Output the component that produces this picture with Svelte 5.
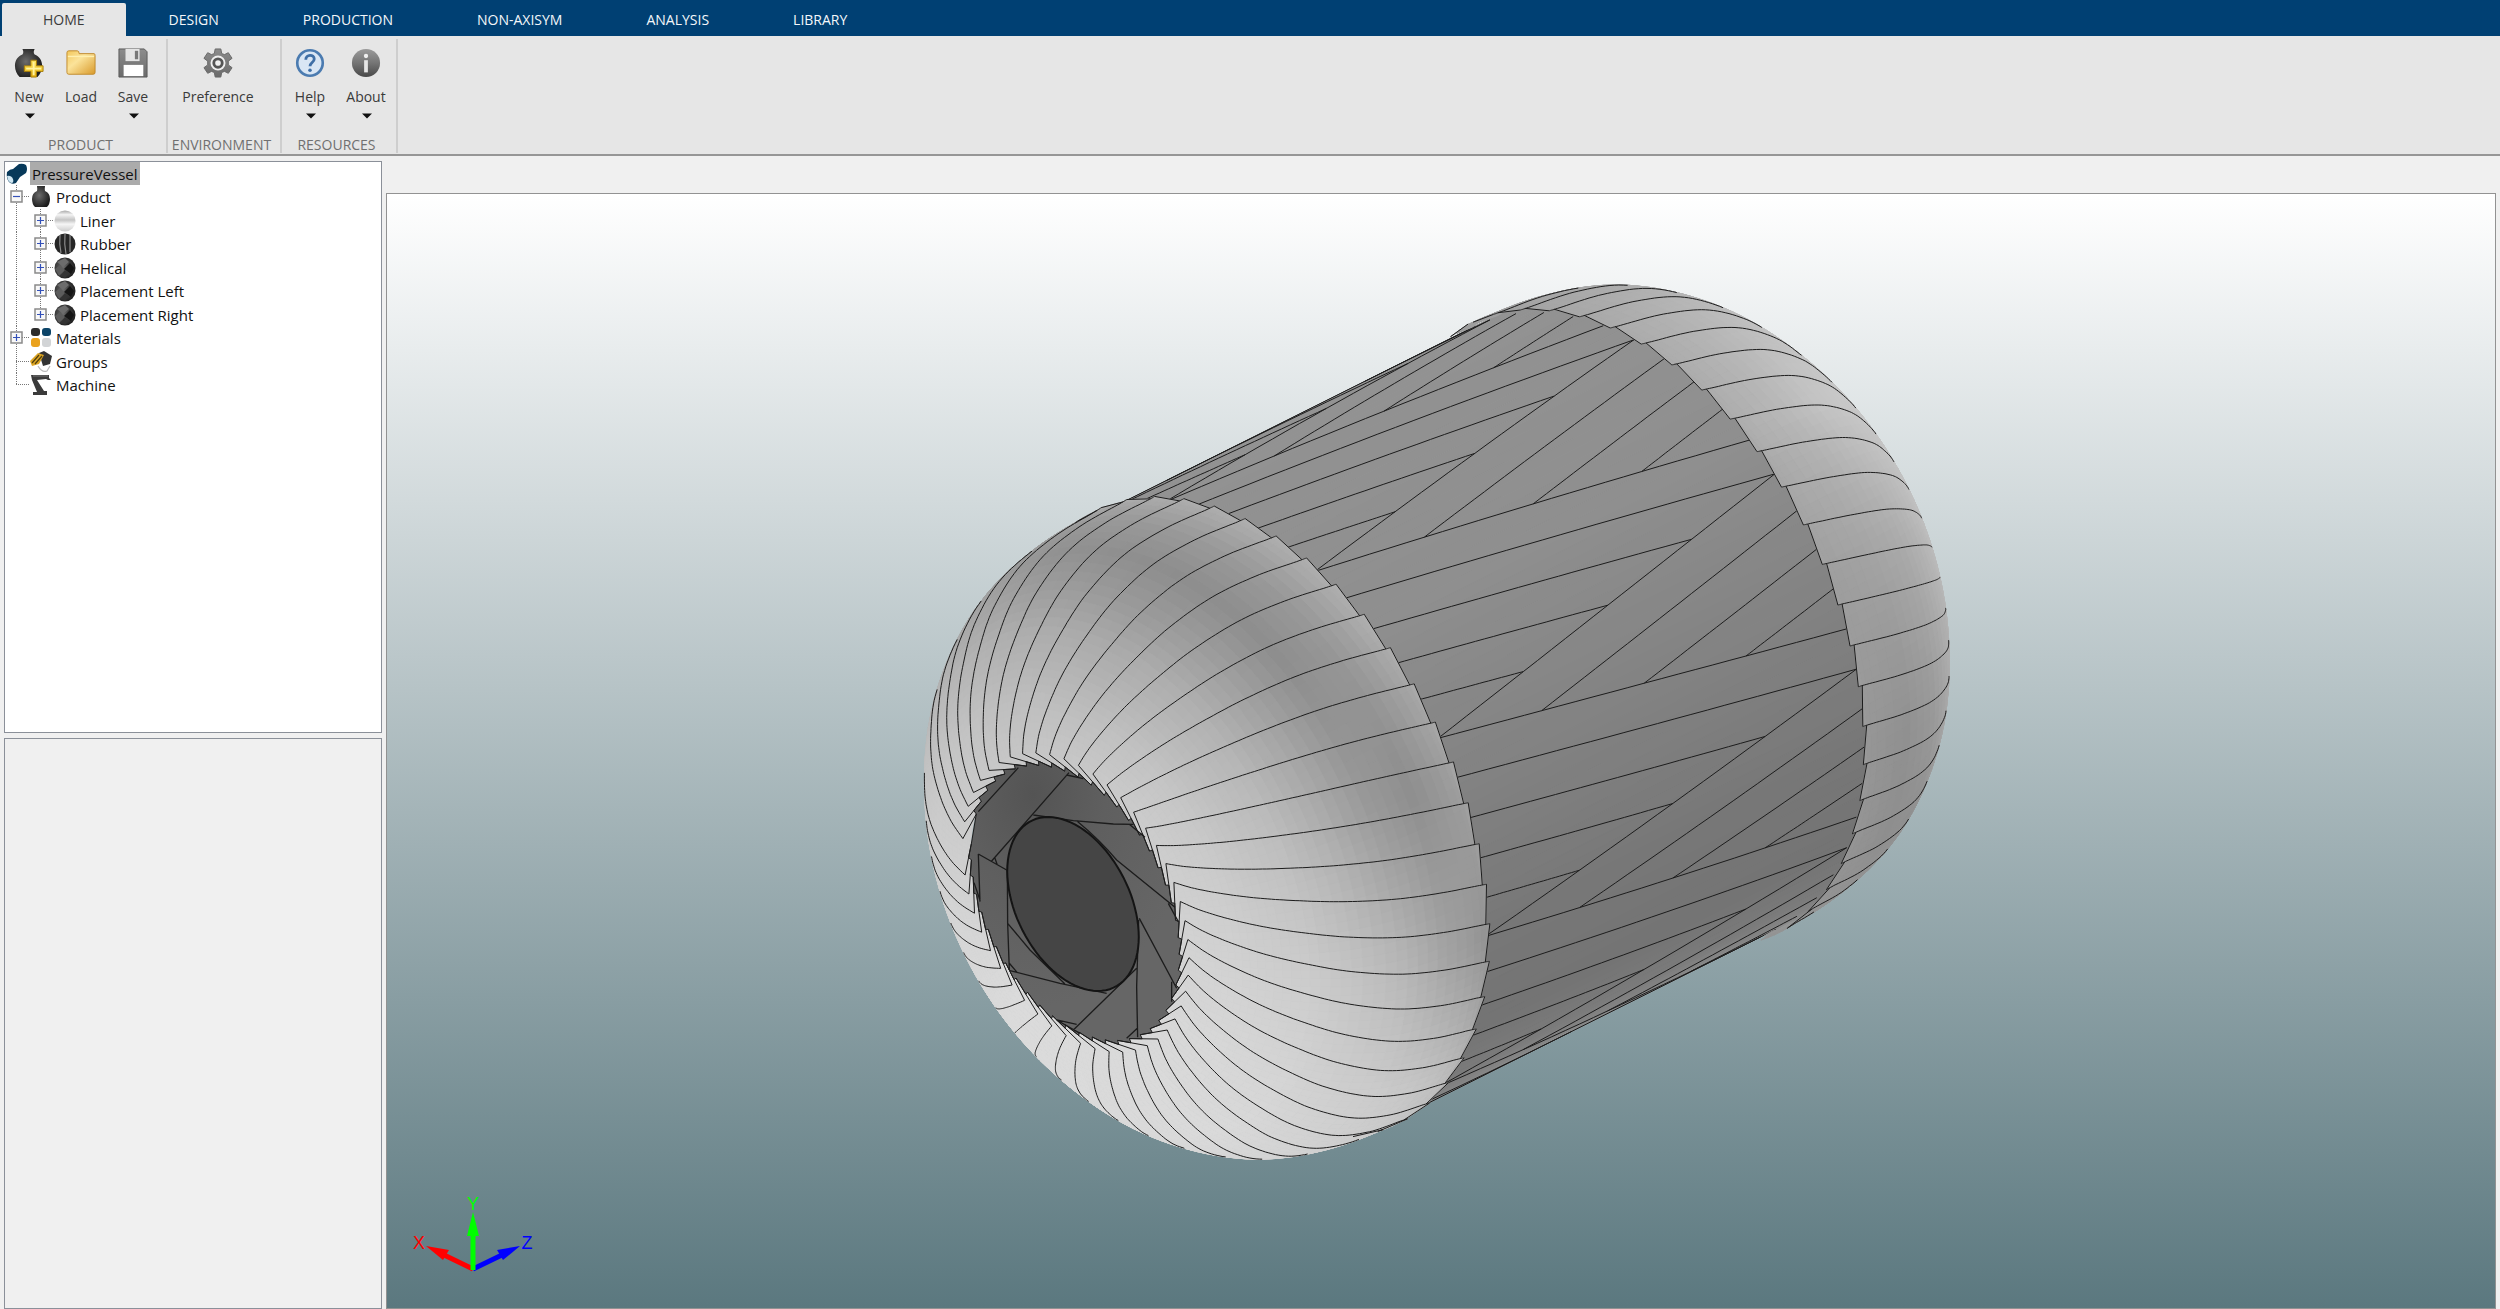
<script>
  const tabs = ['HOME', 'DESIGN', 'PRODUCTION', 'NON-AXISYM', 'ANALYSIS', 'LIBRARY'];
  let activeTab = $state('HOME');
  let selected = $state('PressureVessel');

  const groups = [
    {
      name: 'PRODUCT',
      kind: 'product',
      items: [
        { label: 'New', icon: 'new', menu: true },
        { label: 'Load', icon: 'load', menu: false },
        { label: 'Save', icon: 'save', menu: true }
      ]
    },
    {
      name: 'ENVIRONMENT',
      kind: 'environment',
      items: [{ label: 'Preference', icon: 'gear', menu: false }]
    },
    {
      name: 'RESOURCES',
      kind: 'resources',
      items: [
        { label: 'Help', icon: 'help', menu: true },
        { label: 'About', icon: 'about', menu: true }
      ]
    }
  ];

  // Guide cells: v = vertical line, h = branch, box = expander sign
  const rows = [
    { label: 'PressureVessel', icon: 'root', cells: [] },
    { label: 'Product', icon: 'vessel', cells: [{ v: 'full', h: true, box: '-' }] },
    { label: 'Liner', icon: 'liner', cells: [{ v: 'full' }, { v: 'full', h: true, box: '+' }] },
    { label: 'Rubber', icon: 'rubber', cells: [{ v: 'full' }, { v: 'full', h: true, box: '+' }] },
    { label: 'Helical', icon: 'helical', cells: [{ v: 'full' }, { v: 'full', h: true, box: '+' }] },
    { label: 'Placement Left', icon: 'helical', cells: [{ v: 'full' }, { v: 'full', h: true, box: '+' }] },
    { label: 'Placement Right', icon: 'helical', cells: [{ v: 'full' }, { v: 'half', h: true, box: '+' }] },
    { label: 'Materials', icon: 'materials', cells: [{ v: 'full', h: true, box: '+' }] },
    { label: 'Groups', icon: 'groups', cells: [{ v: 'full', h: true }] },
    { label: 'Machine', icon: 'machine', cells: [{ v: 'half', h: true }] }
  ];

  // ---- Vessel geometry: surface of revolution about Z, orthographic view ----
  const RAD = Math.PI / 180;
  const CX = 1073;
  const CY = 904;
  const STRIPS = 49;
  const PITCH = 360 / STRIPS;
  const MIRROR = 1029;
  const CYL_R = 337;
  const SEAM = 29;

  function project(z, r, deg) {
    const c = Math.cos(deg * RAD);
    const s = Math.sin(deg * RAD);
    return [CX + 0.7071 * (z - r * c), CY - 0.3536 * (z + r * c) - 0.866 * r * s];
  }

  // [radius, z] from the polar opening to the rim
  const body = [[148, 3], [180, 7], [210, 18], [240, 35], [270, 60], [300, 93], [325, 138]];
  const leftProfile = [...body, [337, 188], [341, 238], [342, 248]];
  const rightProfile = [...body, [337, 190], [341, 242], [342, 253]];
  const LAST = leftProfile.length - 1;

  function at(u, right) {
    const profile = right ? rightProfile : leftProfile;
    const i = Math.min(LAST - 1, Math.max(0, Math.floor(u)));
    const t = u - i;
    const p0 = profile[Math.max(0, i - 1)];
    const p1 = profile[i];
    const p2 = profile[i + 1];
    const p3 = profile[Math.min(LAST, i + 2)];
    return [0, 1].map(
      (k) =>
        0.5 *
        (2 * p1[k] + (p2[k] - p0[k]) * t +
          (2 * p0[k] - 5 * p1[k] + 4 * p2[k] - p3[k]) * t * t +
          (3 * p1[k] - p0[k] - 3 * p2[k] + p3[k]) * t * t * t)
    );
  }

  function facing(u, deg, right) {
    const a = at(Math.max(0, u - 0.05), right);
    const b = at(Math.min(LAST, u + 0.05), right);
    const dr = b[0] - a[0];
    const dz = b[1] - a[1];
    const n = Math.hypot(dr, dz) || 1;
    const radial = -0.612 * Math.cos(deg * RAD) + 0.5 * Math.sin(deg * RAD);
    return (dz / n) * radial + (right ? -0.612 : 0.612) * (dr / n);
  }

  function surf(u, deg, right) {
    const [r, z] = at(u, right);
    return project(right ? MIRROR - z : z, r, deg);
  }

  // Angular drift of a fibre from the rim towards the pole
  const U0 = 0.44;
  const STEPS = 120;
  const drift = [0];
  {
    let prev = at(LAST, false);
    for (let i = 1; i <= STEPS; i++) {
      const p = at(LAST - ((LAST - U0) * i) / STEPS, false);
      const ds = Math.hypot(p[0] - prev[0], p[1] - prev[1]);
      drift.push(drift[i - 1] + ds / (p[0] * Math.sqrt(p[0] * p[0] - 4900)));
      prev = p;
    }
    const total = drift[STEPS];
    for (let i = 0; i <= STEPS; i++) drift[i] = (drift[i] / total) * 20;
  }
  function offset(u) {
    const x = ((LAST - u) / (LAST - U0)) * STEPS;
    const i = Math.min(STEPS - 1, Math.max(0, Math.floor(x)));
    return drift[i] + (drift[i + 1] - drift[i]) * (x - i);
  }

  const shadeU = [0, 2, 4, 5, 6, 7, 8, 9];
  const leftShade = [
    [-30, [212, 214, 210, 205, 200, 200, 200, 200]],
    [0, [206, 204, 196, 188, 176, 170, 170, 170]],
    [30, [202, 196, 182, 172, 165, 160, 165, 165]],
    [60, [200, 190, 173, 158, 145, 152, 168, 172]],
    [90, [202, 190, 170, 154, 141, 153, 172, 174]],
    [120, [205, 196, 178, 161, 142, 151, 172, 174]],
    [150, [208, 203, 190, 175, 154, 142, 158, 163]],
    [180, [212, 210, 204, 196, 184, 164, 148, 148]],
    [210, [216, 216, 213, 208, 204, 198, 186, 178]],
    [240, [218, 218, 218, 215, 211, 208, 205, 204]],
    [300, [219, 219, 219, 217, 213, 210, 208, 208]],
    [330, [212, 214, 210, 205, 200, 200, 200, 200]]
  ];
  const rightShade = [
    [30, [150, 150, 150, 150, 150, 150, 150, 150]],
    [60, [170, 170, 172, 170, 168, 166, 162, 160]],
    [90, [195, 195, 195, 192, 185, 178, 172, 172]],
    [120, [198, 198, 200, 200, 196, 184, 174, 172]],
    [150, [190, 190, 190, 182, 170, 162, 158, 160]],
    [180, [178, 178, 178, 170, 154, 144, 150, 153]],
    [205, [170, 170, 172, 162, 144, 142, 148, 150]],
    [235, [165, 165, 165, 160, 155, 150, 148, 148]]
  ];
  const cylShade = [
    [40, 150], [60, 146], [90, 145], [120, 143], [150, 131],
    [180, 119], [200, 116], [215, 123], [235, 146]
  ];

  function lerpKeys(keys, values, x) {
    if (x <= keys[0]) return values[0];
    for (let i = 1; i < keys.length; i++) {
      if (x <= keys[i]) {
        const t = (x - keys[i - 1]) / (keys[i] - keys[i - 1]);
        return values[i - 1] + (values[i] - values[i - 1]) * t;
      }
    }
    return values[values.length - 1];
  }
  function shade(u, deg, right) {
    let d = ((deg % 360) + 360) % 360;
    if (d > 330) d -= 360;
    const table = right ? rightShade : leftShade;
    return lerpKeys(table.map((k) => k[0]), table.map((k) => lerpKeys(shadeU, k[1], u)), d);
  }
  const gray = (v) => `rgb(${Math.round(v)},${Math.round(v)},${Math.round(v)})`;
  const pts = (list) => list.map((p) => p[0].toFixed(1) + ',' + p[1].toFixed(1)).join(' ');

  const INNER = 8.2;

  function dome(right) {
    const quads = [];
    const rings = 36;
    const du = INNER / rings;
    const dd = 2;
    for (let i = 0; i < rings; i++) {
      for (let d = 0; d < 360; d += dd) {
        const u = i * du;
        const f = facing(u + du / 2, d + dd / 2, right);
        if (f < (u > 6 ? -0.12 : -0.25)) continue;
        quads.push({
          f,
          fill: gray(shade(u + du / 2, d + dd / 2, right)),
          points: pts([surf(u, d, right), surf(u + du, d, right), surf(u + du, d + dd, right), surf(u, d + dd, right)])
        });
      }
    }
    quads.sort((a, b) => a.f - b.f);

    const sign = right ? 1 : -1;
    const phase = right ? 138.7 : 162.7;
    const lines = [];
    const teeth = [];
    const edges = [];
    for (let k = 0; k < STRIPS; k++) {
      if (!right && k === SEAM) continue;
      const tip = phase + k * PITCH;
      let run = [];
      for (let s = 0; s <= 90; s++) {
        const u = LAST - ((LAST - U0) * s) / 90;
        const deg = tip + sign * offset(u);
        if (facing(u, deg, right) > -0.02) run.push(surf(u, deg, right));
        else {
          if (run.length > 1) lines.push(pts(run));
          run = [];
        }
      }
      if (run.length > 1) lines.push(pts(run));

      if (facing(8.5, tip, right) > -0.08) {
        const own = surf(INNER, tip + sign * offset(INNER), right);
        const next = surf(INNER, tip - sign * PITCH + sign * offset(INNER), right);
        const tipPoint = surf(LAST, tip, right);
        teeth.push({ points: pts([own, tipPoint, next]), fill: gray(shade(9, tip, right)) });
        edges.push(pts([tipPoint, next]));
      }
    }
    return { quads, lines, teeth, edges };
  }

  // Folded ends round the polar opening
  const corner = (k) => surf(U0, 142.7 + k * PITCH, false);
  const foldEnd = (k) => project(3, 147, 142.7 + k * PITCH + 15);
  const holePoints = [];
  const folds = [];
  for (let k = 0; k < STRIPS; k++) {
    if (k === SEAM) continue;
    const a = corner(k + 1);
    const b = foldEnd(k + 1);
    holePoints.push(foldEnd(k));
    if (k + 1 !== SEAM) holePoints.push([a[0] + (b[0] - a[0]) * 0.55, a[1] + (b[1] - a[1]) * 0.55]);
    folds.push(pts([corner(k), foldEnd(k)]));
  }
  const hole = pts(holePoints);

  const cap = [];
  for (let d = 0; d < 360; d += 4) cap.push(project(0, 93, d));
  const capPoints = pts(cap);

  // Cylinder body: shaded strips and the two helical families
  const cylinder = [];
  for (let d = 50; d < 232; d += 2) {
    const e = Math.min(d + 2, 232);
    cylinder.push({
      fill: gray(lerpKeys(cylShade.map((k) => k[0]), cylShade.map((k) => k[1]), (d + e) / 2)),
      points: pts([project(235, CYL_R, d), project(828, CYL_R, d), project(828, CYL_R, e), project(235, CYL_R, e)])
    });
  }
  const helices = [];
  function helix(start, slope, t0, t1) {
    const run = [];
    for (let i = 0; i <= 24; i++) {
      const t = t0 + ((t1 - t0) * i) / 24;
      const deg = start + slope * t * PITCH;
      if (deg > 50.5 && deg < 231) run.push(project(246 + 536 * t, CYL_R, deg));
    }
    if (run.length > 1) helices.push(pts(run));
  }
  for (let m = -2; m <= 4; m++) {
    const p = 106.6 + m * 5 * PITCH;
    for (let k = 0; k < 5; k++) helix(p + k * PITCH, 2, 0, Math.min(1, (5 - k) / 4));
    for (let j = 0; j < 4; j++) helix(p + j * PITCH, -2, j / 4, 1);
  }
  for (const d of [51, 230.5]) helices.push(pts([project(250, CYL_R, d), project(780, CYL_R, d)]));

  const left = dome(false);
  const right = dome(true);
</script>

{#snippet ribbonIcon(name)}
  <svg class="ribbon-icon" viewBox="0 0 32 32" aria-hidden="true">
    {#if name === 'new'}
      <path d="M9 1h13c-1 2-1.500 4 0 6 5 2 8 6 8 12 0 5-2 9-5 12H6c-3-3-5-7-5-12C1 13 4 9 9 7c1.500-2 1-4 0-6z" fill="url(#coal)" />
      <path d="M18 13h6v6h7v6h-7v6h-6v-6h-7v-6h7z" fill="url(#gold)" stroke="#a67c08" stroke-width="1" />
      <path d="M21 15v14M13 22h16" stroke="#fff3a0" stroke-width="2" />
    {:else if name === 'load'}
      <path d="M1 5q0-2 2-2h9q2 0 2 3h16q1 0 1 2v18q0 2-2 2H3q-2 0-2-2z" fill="url(#folder)" stroke="#c08a2c" />
      <path d="M2 9h28" stroke="#fff0b0" stroke-width="1.500" />
    {:else if name === 'save'}
      <path d="M1 1h27l3 3v27H1z" fill="url(#steel)" stroke="#5a5a5a" />
      <path d="M8 1h15v13H8z" fill="#e4e4e4" />
      <path d="M18 3h3.500v9H18z" fill="#777" />
      <path d="M6 18h21v12H6z" fill="#fff" />
    {:else if name === 'gear'}
      <path d="M13 1h6l1 5 3 1 4-2 4 6-4 3v4l4 3-4 6-4-2-3 1-1 5h-6l-1-5-3-1-4 2-4-6 4-3v-4l-4-3 4-6 4 2 3-1z" fill="url(#steel)" stroke="#686868" stroke-linejoin="round" />
      <circle cx="16" cy="16" r="8" fill="#efefef" />
      <circle cx="16" cy="16" r="4.500" fill="none" stroke="#555" stroke-width="3" />
    {:else if name === 'help'}
      <circle cx="16" cy="16" r="13.600" fill="#d9e6f4" stroke="#4b7bb0" stroke-width="2.800" />
      <path d="M11.500 12.500c0-6 9-6 9-.8 0 3.800-4.500 3.800-4.500 7.800" fill="none" stroke="#3f6fa6" stroke-width="3" />
      <circle cx="16" cy="23.800" r="1.900" fill="#3f6fa6" />
    {:else}
      <circle cx="16" cy="16" r="15" fill="url(#ball)" />
      <circle cx="16" cy="8.500" r="2.300" fill="#f0f0f0" />
      <path d="M14 13h4v13h-4z" fill="#e6e6e6" />
    {/if}
  </svg>
{/snippet}

{#snippet treeIcon(name)}
  <svg class="tree-icon" viewBox="0 0 22 22" aria-hidden="true">
    {#if name === 'root'}
      <path d="M1 9q3-3 6-3l6-5q4-1 7 1 2 4 0 8l-6 4-4 6q-4 2-7-1-3-4-2-10z" fill="#07395a" />
      <path d="M1 13q4-1 6 3 1 3-1 4-4 0-5-7z" fill="#cfe6f2" />
    {:else if name === 'vessel'}
      <path d="M7 0h8q-.5 3 0 5 5 2 5 8 0 5-3 8H5q-3-3-3-8 0-6 5-8 .5-2 0-5z" fill="url(#coal)" />
    {:else if name === 'liner'}
      <circle cx="11" cy="11" r="10.500" fill="url(#linerFill)" />
    {:else if name === 'rubber'}
      <circle cx="11" cy="11" r="10.500" fill="#262626" />
      <path d="M6 2q-1 9 1 18M11 1q-1 10 1 20M16 2q0 9 0 17" stroke="#8a8a8a" stroke-width="1.200" fill="none" />
    {:else if name === 'helical'}
      <circle cx="11" cy="11" r="10.500" fill="url(#coal)" />
      <path d="M3 5 11 1l4 4-6 5z" fill="#6c6c6c" />
      <path d="M1 12 6 8l5 5-6 6z" fill="#5c5c5c" />
      <path d="m10 12 6-6 4 5-3 6z" fill="#151515" />
      <path d="m11 13 4 3-4 5-4-3z" fill="#333" />
    {:else if name === 'materials'}
      <rect x="1" y="1" width="9" height="8" rx="3" fill="#2c2c2c" />
      <rect x="12" y="1" width="9" height="8" rx="3" fill="#0c4468" />
      <rect x="1" y="11" width="9" height="9" rx="3" fill="#eaa21d" />
      <rect x="12" y="11" width="9" height="9" rx="3" fill="#d2d4d6" />
    {:else if name === 'groups'}
      <path d="M9 2 14 0l8 5-2 8-7 2z" fill="#333" />
      <path d="M0 10 8 2l6 2-5 9-7 2z" fill="#dca424" />
      <path d="M2 12 9 4M5 13l7-8" stroke="#50400c" stroke-width="1.200" />
      <path d="M8 15q4 7 9 5l3-5" fill="none" stroke="#bbb" stroke-width="1.200" />
    {:else}
      <path d="m1 1 18 0v3l2 2h-3l-2-1-9 1 7 11h3v4H3v-3h4L2 6z" fill="#3b3b3b" />
      <path d="M3 2h15" stroke="#777" />
    {/if}
  </svg>
{/snippet}

<svg class="defs" width="0" height="0" aria-hidden="true">
  <defs>
    <radialGradient id="coal" cx=".4" cy=".45" r=".6">
      <stop offset="0" stop-color="#6c6c6c" />
      <stop offset=".6" stop-color="#3c3c3c" />
      <stop offset="1" stop-color="#1d1d1d" />
    </radialGradient>
    <linearGradient id="gold" x1="0" y1="0" x2="0" y2="1">
      <stop offset="0" stop-color="#ffe860" />
      <stop offset="1" stop-color="#e2ae10" />
    </linearGradient>
    <linearGradient id="folder" x1="0" y1="0" x2="1" y2="1">
      <stop offset="0" stop-color="#f3c85c" />
      <stop offset=".4" stop-color="#fbe39a" />
      <stop offset="1" stop-color="#d99a2b" />
    </linearGradient>
    <linearGradient id="steel" x1="0" y1="0" x2="0" y2="1">
      <stop offset="0" stop-color="#8c8c8c" />
      <stop offset="1" stop-color="#6b6b6b" />
    </linearGradient>
    <linearGradient id="ball" x1="0" y1="0" x2="0" y2="1">
      <stop offset="0" stop-color="#9b9b9b" />
      <stop offset=".5" stop-color="#757575" />
      <stop offset="1" stop-color="#484848" />
    </linearGradient>
    <linearGradient id="linerFill" x1="0" y1="0" x2="0" y2="1">
      <stop offset="0" stop-color="#a8a8a8" />
      <stop offset=".2" stop-color="#f4f4f4" />
      <stop offset=".45" stop-color="#c4c4c4" />
      <stop offset=".65" stop-color="#f6f6f6" />
      <stop offset="1" stop-color="#cccccc" />
    </linearGradient>
    <radialGradient id="holeFill" cx=".3" cy=".12" r=".75">
      <stop offset="0" stop-color="#545454" />
      <stop offset=".45" stop-color="#5f5f5f" />
      <stop offset="1" stop-color="#666" />
    </radialGradient>
  </defs>
</svg>

<div class="app">
  <nav class="tabs">
    {#each tabs as tab}
      <button class="tab" class:active={tab === activeTab} onclick={() => (activeTab = tab)}>{tab}</button>
    {/each}
  </nav>

  <header class="ribbon">
    {#each groups as group}
      <section class="group {group.kind}">
        <div class="tools">
          {#each group.items as item}
            <button class="tool">
              {@render ribbonIcon(item.icon)}
              <span>{item.label}</span>
              {#if item.menu}
                <svg class="caret" viewBox="0 0 12 6" aria-hidden="true"><path d="M0 0h12L6 6z" /></svg>
              {/if}
            </button>
          {/each}
        </div>
        <div class="group-name">{group.name}</div>
      </section>
    {/each}
  </header>

  <main class="work">
    <aside class="side">
      <div class="panel tree">
        {#each rows as row}
          <div class="row">
            {#each row.cells as cell}
              <svg class="guide" viewBox="0 0 24 24" aria-hidden="true">
                <g stroke="#777" stroke-dasharray="1 1">
                  <path d={cell.v === 'full' ? 'M10.500 0v24' : 'M10.500 0v12'} />
                  {#if cell.h}<path d="M10 11.500h14" />{/if}
                </g>
                {#if cell.box}
                  <rect x="5" y="6" width="11" height="11" fill="#f8f8f8" stroke="#8a8a8a" stroke-width="1.500" />
                  <path d={cell.box === '+' ? 'M7 11.500h7M10.500 8v7' : 'M7 11.500h7'} stroke="#3350b8" stroke-width="1.200" />
                {/if}
              </svg>
            {/each}
            {@render treeIcon(row.icon)}
            <button class="node" class:selected={selected === row.label} onclick={() => (selected = row.label)}>{row.label}</button>
          </div>
        {/each}
      </div>
      <div class="panel details"></div>
    </aside>

    <section class="viewport" aria-label="3D view">
      <svg class="scene" viewBox="387 194 2108 1114" aria-hidden="true">
        <g class="mesh">
          {#each cylinder as q}<polygon points={q.points} fill={q.fill} stroke={q.fill} />{/each}
        </g>
        <g class="fibre">
          {#each helices as h}<polyline points={h} />{/each}
        </g>
        {#each [right, left] as part}
          <g class="mesh">
            {#each part.quads as q}<polygon points={q.points} fill={q.fill} stroke={q.fill} />{/each}
            {#each part.teeth as q}<polygon points={q.points} fill={q.fill} stroke={q.fill} />{/each}
          </g>
          <g class="fibre">
            {#each part.lines as l}<polyline points={l} />{/each}
            {#each part.edges as l}<polyline points={l} />{/each}
          </g>
        {/each}
        <polygon points={hole} fill="url(#holeFill)" class="edge" />
        <g class="fibre">
          {#each folds as l}<polyline points={l} />{/each}
        </g>
        <g transform="translate(900 700) scale(.3333)" class="inner">
          <path d="M355 203 235 335M507 218 275 483M235 462 320 510M235 462 240 605M500 225 550 236M400 345 520 362 640 372 700 373M688 373 735 412M650 480 825 622M805 610 835 665M530 362Q600 420 650 480M718 655 830 865M716 660 710 860 713 1012M710 805 520 990M330 812 480 850 620 880M322 510 323 670 328 810M323 670 390 750 495 852M328 790 352 818M470 960 530 973M470 960 540 1000M815 845V905M680 1015 712 985M222 548 240 600M285 475 292 495" />
        </g>
        <polygon points={capPoints} class="cap" />
      </svg>

      <svg class="triad" viewBox="400 1190 140 108" aria-hidden="true">
        <path d="M473 1269 442 1254" stroke="#f00" stroke-width="5" />
        <path d="m426 1246 23 4-6 10z" fill="#f00" />
        <path d="M473 1269 504 1254" stroke="#00f" stroke-width="5" />
        <path d="m520 1246-23 4 6 10z" fill="#00f" />
        <path d="M473 1270v-36" stroke="#0f0" stroke-width="5" />
        <path d="M473 1212l6 24h-12z" fill="#0f0" />
        <text x="419" y="1249" fill="#f00">X</text>
        <text x="473" y="1210" fill="#0f0">Y</text>
        <text x="527" y="1249" fill="#00f">Z</text>
      </svg>
    </section>
  </main>
</div>

<style>
  :global(body) {
    margin: 0;
  }
  .defs {
    position: absolute;
  }
  .app {
    display: flex;
    flex-direction: column;
    height: 100vh;
    background: #f0f0f0;
    font-family: 'Open Sans', 'Noto Sans', sans-serif;
    font-size: 14px;
    line-height: 20px;
    color: #111;
  }
  button {
    font: inherit;
    color: inherit;
    background: none;
    border: 0;
    padding: 0;
    cursor: pointer;
  }
  .tabs {
    display: flex;
    flex: none;
    gap: 2px;
    height: 33px;
    padding: 3px 2px 0;
    background: #004073;
  }
  .tab {
    padding: 0 41px;
    color: #f4f7fa;
    border-radius: 2px 2px 0 0;
  }
  .tab.active {
    background: #e6e6e6;
    color: #3c3c3c;
  }
  .ribbon {
    display: flex;
    flex: none;
    height: 118px;
    background: #e6e6e6;
    border-bottom: 2px solid #969696;
  }
  .group {
    display: flex;
    flex-direction: column;
    justify-content: space-between;
    margin: 3px 0 1px;
    border-right: 2px solid #cecece;
  }
  .tools {
    display: flex;
    padding-top: 8px;
  }
  .product .tools {
    padding-left: 3px;
    padding-right: 7px;
  }
  .tool {
    display: flex;
    flex-direction: column;
    align-items: center;
    width: 52px;
    color: #3a3a3a;
  }
  .environment .tool {
    width: 100px;
  }
  .environment .tools {
    padding-right: 12px;
  }
  .resources .tool {
    width: 56px;
  }
  .resources .tools {
    padding-right: 2px;
  }
  .ribbon-icon {
    width: 30px;
    height: 32px;
    margin-bottom: 8px;
  }
  .caret {
    width: 10px;
    height: 6px;
    margin: 6px 0 0 2px;
    fill: #111;
  }
  .group-name {
    padding-right: 5px;
    text-align: center;
    line-height: 16px;
    color: #707070;
  }
  .work {
    display: flex;
    flex: 1;
    min-height: 0;
    gap: 4px;
    padding: 5px 4px 0 4px;
  }
  .side {
    display: flex;
    flex: none;
    flex-direction: column;
    gap: 5px;
    width: 378px;
  }
  .panel {
    flex: 1;
    min-height: 0;
    box-sizing: border-box;
    border: 1px solid #8b9099;
    padding-left: 1px;
  }
  .tree {
    background: #fff;
    font-size: 15px;
  }
  .row {
    display: flex;
    align-items: center;
    height: 23px;
  }
  .row:nth-child(even) {
    height: 24px;
  }
  .guide {
    flex: none;
    width: 24px;
    height: 24px;
    fill: none;
  }
  .tree-icon {
    flex: none;
    width: 22px;
    height: 22px;
    margin-right: 2px;
  }
  .node {
    height: 23px;
    padding: 0 2px;
    white-space: nowrap;
  }
  .node.selected {
    background: #ababab;
  }
  .viewport {
    position: relative;
    flex: 1;
    min-width: 0;
    margin-top: 32px;
    border: 1px solid #929292;
    background: linear-gradient(#fff, #5b787f);
    overflow: hidden;
  }
  .scene {
    display: block;
    width: 100%;
    height: 100%;
  }
  .mesh {
    stroke-width: 1;
    stroke-linejoin: round;
  }
  .fibre,
  .inner {
    fill: none;
    stroke: #1c1c1c;
    stroke-width: 1;
  }
  .inner {
    stroke-width: 4;
  }
  .edge {
    stroke: #1c1c1c;
    stroke-width: 1;
  }
  .cap {
    fill: #454545;
    stroke: #141414;
    stroke-width: 2;
  }
  .triad {
    position: absolute;
    left: 13px;
    bottom: 10px;
    width: 140px;
    height: 108px;
  }
  .triad text {
    font-family: 'Liberation Sans', sans-serif;
    font-size: 18px;
    text-anchor: middle;
  }
</style>
